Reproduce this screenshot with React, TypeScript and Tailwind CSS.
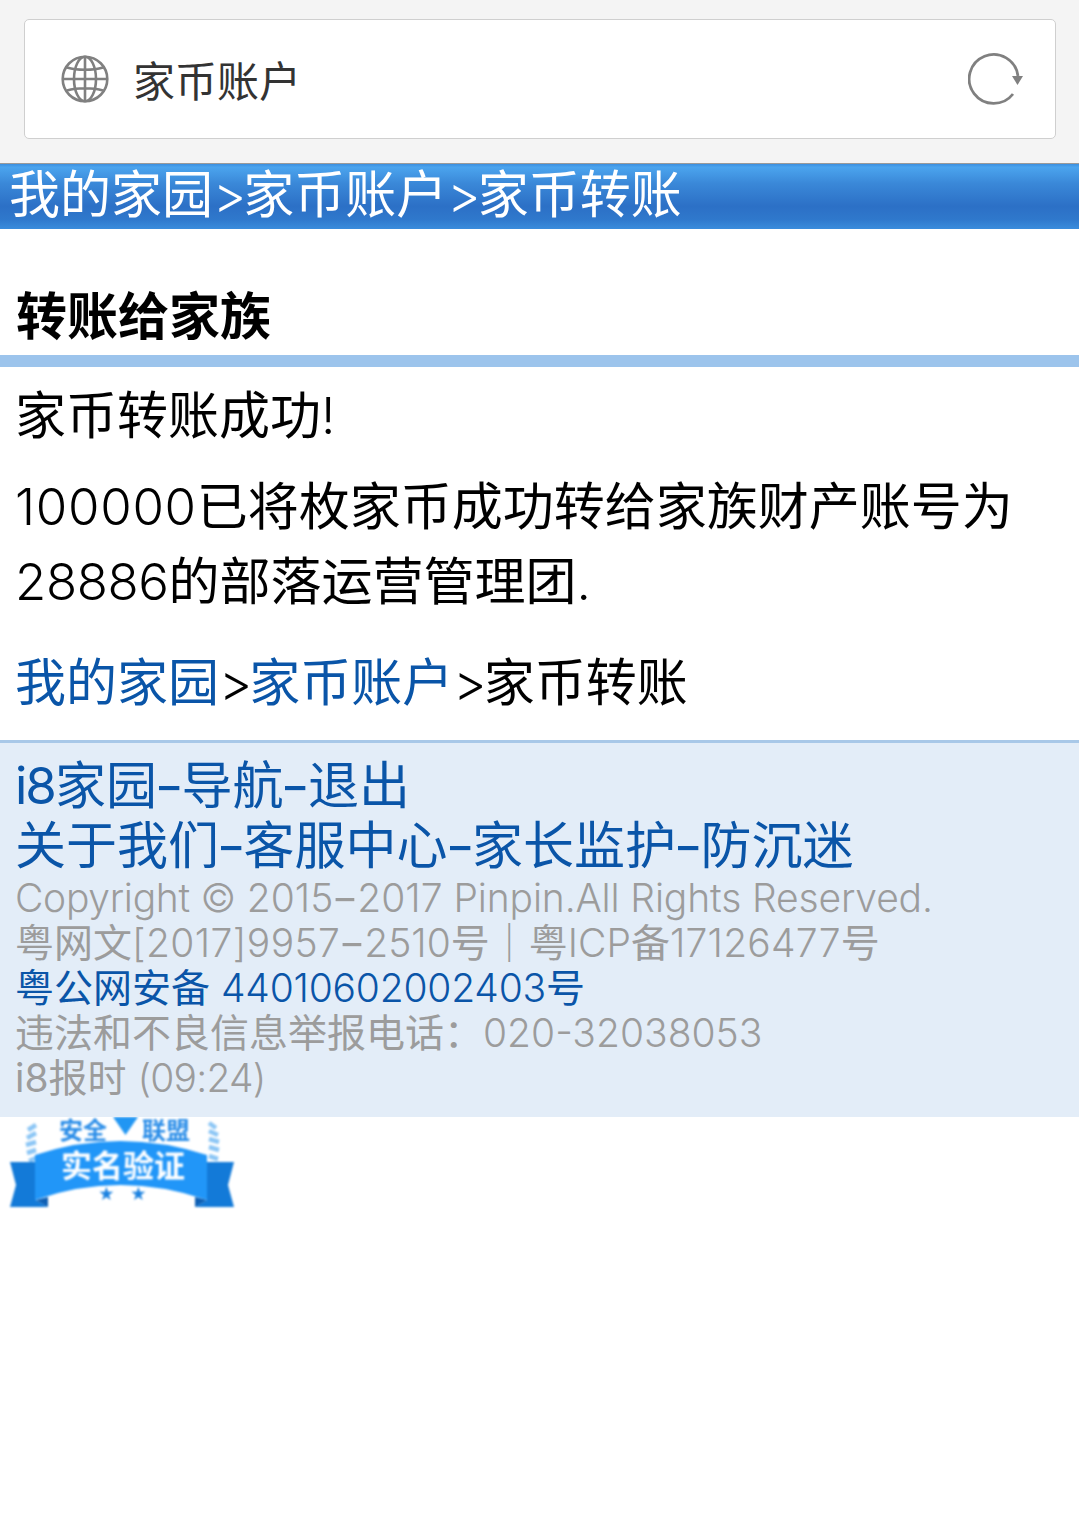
function Dash() {
  return <span className="inline-block font-normal px-[3px] scale-x-150">-</span>;
}

function BigDash() {
  return <span className="inline-block px-[0.500px] scale-x-125">-</span>;
}

export default function App() {
  const cjk = "font-['Inter','Noto_Sans_CJK_SC',sans-serif]";
  return (
    <div className={`w-[1079px] h-[1527px] bg-white overflow-hidden font-normal text-[51px] leading-[60px] text-black ${cjk}`}>
      <div className="bg-[#f4f4f4] h-[163px] pl-6 pr-[23px] pt-[19px]">
        <div className="h-[120px] bg-white border border-[#cfcfcf] rounded-[5px] flex items-center justify-between pl-[36px] pr-[31px]">
          <div className="flex items-center">
            <svg width="48" height="48" viewBox="0 0 48 48" fill="none" stroke="#808080" strokeWidth="2.6">
              <circle cx="24" cy="24" r="22.3" />
              <ellipse cx="24" cy="24" rx="11" ry="22.3" />
              <path d="M24 2v44M2 24h44M6 12.5c10 3 26 3 36 0M6 35.500c10-3 26-3 36 0" />
            </svg>
            <span className="ml-[24px] pt-[6px] text-[42px] leading-[48px] text-[#333] font-normal">家币账户</span>
          </div>
          <svg width="56" height="54" viewBox="0 0 56 54" fill="none">
            <path d="M45 42A24.500 24.500 0 1 1 50 24" stroke="#808080" strokeWidth="2.800" />
            <path d="M44 24h11l-5.500 9z" fill="#808080" />
          </svg>
        </div>
      </div>
      <div className="h-[66px] pl-[9px] pb-[4px] flex items-center text-white whitespace-nowrap border-t border-[#9a9a9a] bg-[linear-gradient(#3b8fe0_0%,#4ba4ee_5%,#3a88d8_30%,#2c70c6_65%,#2f78cc_85%,#3a8cdc_100%)]">
        我的家园<span className="tracking-[-3px] font-light">&gt;</span>家币账户<span className="tracking-[-3px] font-light">&gt;</span>家币转账
      </div>
      <h1 className="mt-[57px] px-4 pt-[1px] font-bold text-[51px] leading-[60px] text-black h-[69px]">转账给家族</h1>
      <div className="h-3 bg-[#9cc4ec]" />
      <p className="px-[15px] pt-[19px]">家币转账成功<span className="font-light tracking-[-3px]">!</span></p>
      <p className="px-[15px] pt-[23px] leading-[75px] w-[1040px]">
        <span className="font-light tracking-[0.700px]">100000</span>已将枚家币成功转给家族财产账号为<span className="font-light tracking-[-0.400px]">28886</span>的部落运营管理团<span className="font-light">.</span>
      </p>
      <p className="px-[15px] pt-[34px] whitespace-nowrap">
        <a className="text-[#0a55a8]">我的家园</a><span className="tracking-[-3px] font-light">&gt;</span><a className="text-[#0a55a8]">家币账户</a><span className="tracking-[-3px] font-light">&gt;</span>家币转账
      </p>
      <div className="mt-[27px] h-[377px] bg-[#e3edf8] border-t-[3px] border-[#a8c8e8] pl-[15px] pr-4 pt-[13px]">
        <div className="text-[#0a55a8] leading-[60px] whitespace-nowrap">
          <span className="tracking-[-2px]">i8</span>家园<BigDash />导航<BigDash />退出
        </div>
        <div className="text-[#0a55a8] leading-[60px] whitespace-nowrap">关于我们<BigDash />客服中心<BigDash />家长监护<BigDash />防沉迷</div>
        <div className="-mt-[1px] text-[39px] leading-[45px] text-[#9c9c9c] whitespace-nowrap">
          <div className="font-light">
            <span className="tracking-[-0.300px]">Copyright ©</span> 2015<Dash />2017 <span className="tracking-[-0.150px]">Pinpin.All Rights Reserved.</span>
          </div>
          <div>
            粤网文<span className="font-light tracking-[0.400px]">[2017]9957</span><Dash /><span className="font-light">2510</span>号<span className="font-medium">｜</span>粤<span className="font-light">ICP</span>备<span className="font-light tracking-[0.250px]">17126477</span>号
          </div>
          <div className="text-[#0a55a8]">粤公网安备 <span className="font-light tracking-[-0.200px]">44010602002403</span>号</div>
          <div>违法和不良信息举报电话：<span className="font-light">020-32038053</span></div>
          <div>i8报时 <span className="font-light tracking-[-0.800px]">(09:24)</span></div>
        </div>
      </div>
      <svg width="240" height="92" viewBox="0 0 240 92" className="block">
        <g style={{ filter: "blur(0.8px)" }}>
          <text x="59" y="22" fontSize="24" fontWeight="700" fill="#2a8de8">安全</text>
          <path d="M113 0h25l-12.500 18z" fill="#2196f3" />
          <text x="142" y="22" fontSize="24" fontWeight="700" fill="#2a8de8">联盟</text>
          <path d="M36 8l-8 5M36 16l-9 5M36 25l-10 3M36 33l-9 3M36 41l-7 3" stroke="#8cc6f5" strokeWidth="4.500" fill="none" />
          <path d="M209 6l7 5M209 14l9 4M209 22l10 3M209 30l10 3M209 39l9 3" stroke="#8cc6f5" strokeWidth="4.500" fill="none" />
          <path d="M10 45h26v38l12 7H10l6-22z" fill="#137ad8" />
          <path d="M234 45h-27v38l-12 7h39l-6-22z" fill="#137ad8" />
          <path d="M36 83l12 7V80z" fill="#0d5fb4" />
          <path d="M207 83l-12 7V80z" fill="#0d5fb4" />
          <path d="M35 38Q120 10 207 38V83Q120 53 35 83z" fill="#2196f8" />
          <text x="61" y="60" fontSize="31" fontWeight="700" fill="#fff">实名验证</text>
          <text x="98" y="83" fontSize="16" fill="#1c82e0">★</text>
          <text x="130" y="83" fontSize="16" fill="#1c82e0">★</text>
        </g>
      </svg>
    </div>
  );
}
